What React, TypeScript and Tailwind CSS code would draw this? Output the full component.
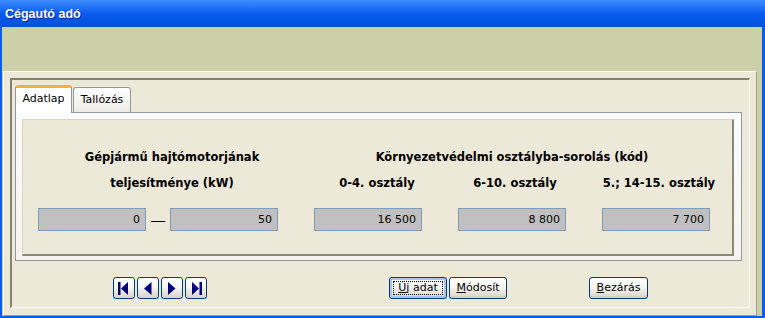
import React from "react";

const UI = "font-['DejaVu_Sans',sans-serif]";
const LABEL = `whitespace-nowrap text-center text-[11.5px] font-bold leading-[26px] text-black ${UI}`;

const navIcons: React.ReactNode[] = [
  <>
    <rect x="4" y="4" width="2.5" height="13" />
    <polygon points="7,10.5 14,4 14,17" />
  </>,
  <polygon points="6,10.5 13.5,4 13.5,17" />,
  <polygon points="6,4 6,17 13.5,10.5" />,
  <>
    <polygon points="6,4 6,17 13,10.5" />
    <rect x="13.5" y="4" width="2.5" height="13" />
  </>,
];

function XpButton({
  children,
  width,
  focused = false,
}: {
  children: React.ReactNode;
  width: string;
  focused?: boolean;
}) {
  return (
    <button
      type="button"
      className={`relative flex h-[22px] ${width} items-center justify-center rounded-[3px] border border-[#003C74] bg-gradient-to-b from-white via-[#F4F3EE] to-[#D9D3C8] text-[11px] text-black ${UI} ${
        focused ? "shadow-[inset_0_0_0_2px_#A9C4EF]" : "shadow-[inset_0_-2px_0_#D6D0C5]"
      }`}
    >
      {focused && (
        <span className="pointer-events-none absolute inset-[3px] border border-dotted border-black" />
      )}
      {children}
    </button>
  );
}

function ValueBox({ value }: { value: string }) {
  return (
    <div
      className={`h-[23px] w-[108px] border border-[#7F9DB9] bg-[#C0C0C0] pr-[5px] text-right text-[11px] leading-[21px] text-black ${UI}`}
    >
      {value}
    </div>
  );
}

export default function App() {
  return (
    <div className="flex h-[318px] w-[765px] flex-col overflow-hidden bg-[#0B5CEB]">
      {/* title bar */}
      <div className="flex h-[27px] items-center bg-gradient-to-b from-[#3D8DFF] via-[#0A5BEE] to-[#0250DC] pl-[5px] pt-[2px]">
        <span className="font-['Liberation_Sans',sans-serif] text-[12.5px] font-bold text-white [text-shadow:1px_1px_0_#0A2A9C]">
          Cégautó adó
        </span>
      </div>

      {/* window body */}
      <div className="flex-1 border-b-2 border-l-2 border-r-[3px] border-[#0B5CEB] bg-[#CCD0A8] pl-px pr-[5px] pt-[44px]">
        {/* outer panel */}
        <div className="h-[245px] border border-b-[#A3A092] border-l-white border-r-[#A3A092] border-t-white bg-[#ECE9D8] p-[6px] pb-[7px]">
          {/* groove */}
          <div className="flex h-[230px] flex-col border-b border-l-2 border-r border-t-2 border-b-white border-l-[#858272] border-r-white border-t-[#858272] pl-[3px] pr-[7px] pt-[5px]">
            {/* tab headers */}
            <div className="relative z-10 flex h-[27px] items-end gap-px">
              <div
                className={`-mb-px flex h-[28px] w-[57px] items-center justify-center rounded-t-[3px] border-l border-r border-t-[3px] border-l-[#919B9C] border-r-[#919B9C] border-t-[#F5B13F] bg-white pb-[2px] text-[11px] text-black ${UI}`}
              >
                Adatlap
              </div>
              <div
                className={`flex h-[25px] w-[58px] items-center justify-center rounded-t-[3px] border-l border-r border-t border-[#919B9C] bg-gradient-to-b from-white to-[#ECEBE5] text-[11px] text-black ${UI}`}
              >
                Tallózás
              </div>
            </div>

            {/* tab pane */}
            <div className="h-[149px] w-[727px] border border-[#919B9C] bg-gradient-to-b from-[#FCFCFE] to-[#F4F3EE] pb-[4px] pl-[6px] pr-[7px] pt-[6px]">
              <div className="flex h-[137px] items-start border-b-2 border-l border-r-2 border-t border-b-[#8C897B] border-l-[#D8D5C6] border-r-[#8C897B] border-t-[#D8D5C6] bg-[#ECE9D8] pl-[15px] pt-[24px]">
                {/* left column */}
                <div className="flex w-[240px] flex-col">
                  <div className={`pl-[28px] ${LABEL}`}>
                    <div>Gépjármű hajtómotorjának</div>
                    <div>teljesítménye (kW)</div>
                  </div>
                  <div className="mt-[12px] flex items-center justify-between">
                    <ValueBox value="0" />
                    <span className="font-['Liberation_Sans',sans-serif] text-[14px] leading-none text-black">
                      —
                    </span>
                    <ValueBox value="50" />
                  </div>
                </div>

                {/* right group */}
                <div className="ml-[36px] grid grid-cols-[108px_108px_108px] content-start gap-x-[36px]">
                  <div className={`col-span-3 ${LABEL}`}>
                    Környezetvédelmi osztályba-sorolás (kód)
                  </div>
                  <div className={`-mx-[20px] pl-[18px] ${LABEL}`}>0-4. osztály</div>
                  <div className={`-mx-[20px] pl-[6px] ${LABEL}`}>6-10. osztály</div>
                  <div className={`-mx-[20px] pl-[6px] ${LABEL}`}>5.; 14-15. osztály</div>
                  <div className="col-span-3 mt-[12px] flex gap-[36px]">
                    <ValueBox value="16 500" />
                    <ValueBox value="8 800" />
                    <ValueBox value="7 700" />
                  </div>
                </div>
              </div>
            </div>

            {/* buttons row */}
            <div className="mt-[16px] flex items-center">
              <div className="ml-[98px] flex gap-[2px]">
                {navIcons.map((icon, i) => (
                  <button
                    key={i}
                    type="button"
                    className="flex h-[22px] w-[22px] items-center justify-center rounded-[3px] border border-[#003C74] bg-gradient-to-b from-white via-[#F4F3EE] to-[#D9D3C8]"
                  >
                    <svg width="20" height="20" viewBox="0 0 20 20" fill="#000080">
                      {icon}
                    </svg>
                  </button>
                ))}
              </div>
              <div className="ml-[182px] flex gap-[2px]">
                <XpButton width="w-[58px]" focused>
                  <span>
                    <u>Ú</u>j adat
                  </span>
                </XpButton>
                <XpButton width="w-[58px]">
                  <span>
                    <u>M</u>ódosít
                  </span>
                </XpButton>
              </div>
              <div className="ml-[82px]">
                <XpButton width="w-[59px]">
                  <span>
                    <u>B</u>ezárás
                  </span>
                </XpButton>
              </div>
            </div>
          </div>
        </div>
      </div>
    </div>
  );
}
